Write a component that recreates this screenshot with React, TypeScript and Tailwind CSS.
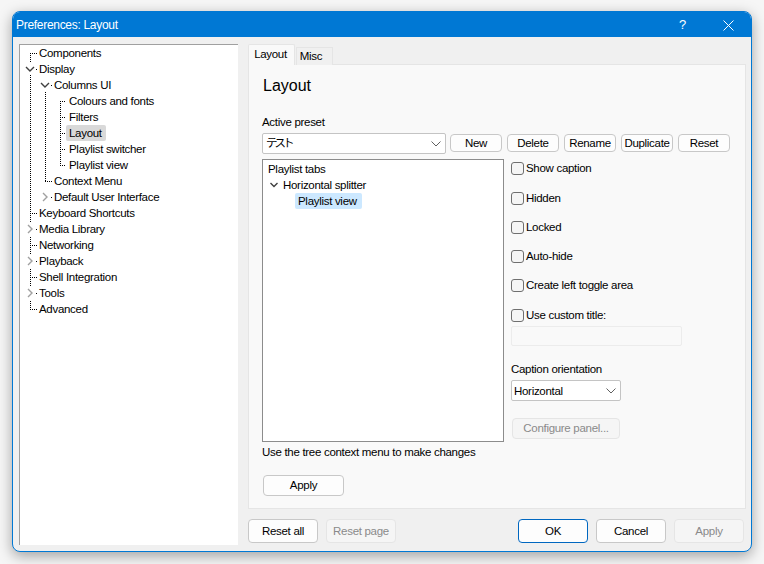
import React from "react";

const font = { fontFamily: '"Liberation Sans", "Noto Sans CJK JP", sans-serif' };

const treeRows: [number, string, boolean?][] = [
  [0, "Components"],
  [0, "Display"],
  [1, "Columns UI"],
  [2, "Colours and fonts"],
  [2, "Filters"],
  [2, "Layout", true],
  [2, "Playlist switcher"],
  [2, "Playlist view"],
  [1, "Context Menu"],
  [1, "Default User Interface"],
  [0, "Keyboard Shortcuts"],
  [0, "Media Library"],
  [0, "Networking"],
  [0, "Playback"],
  [0, "Shell Integration"],
  [0, "Tools"],
  [0, "Advanced"],
];

const pad = ["pl-[16px]", "pl-[31px]", "pl-[46px]"];

function TreeLines() {
  const open = (x: number, y: number) => (
    <path d={`M${x - 4} ${y - 2}L${x} ${y + 2}L${x + 4} ${y - 2}`} stroke="#404040" strokeWidth="1.4" fill="none" />
  );
  const closed = (x: number, y: number) => (
    <path d={`M${x - 2} ${y - 4}L${x + 2} ${y}L${x - 2} ${y + 4}`} stroke="#a0a0a0" strokeWidth="1.4" fill="none" />
  );
  return (
    <svg className="absolute left-0 top-0" width="60" height="280" viewBox="0 0 60 280">
      <g stroke="#000" strokeWidth="1" strokeDasharray="1 1" fill="none" shapeRendering="crispEdges">
        <path d="M10.5 8V17M10.5 30V265" />
        <path d="M10 8.5H18M16 24.5H18M31 40.5H33" />
        <path d="M25.5 47V137" />
        <path d="M40.5 56V121" />
        <path d="M40 56.5H46M40 72.5H46M40 88.5H46M40 104.5H46M40 120.5H46" />
        <path d="M25 136.5H33M31 152.5H33" />
        <path d="M10 168.5H18M16 184.5H18M10 200.5H18M16 216.5H18M10 232.5H18M16 248.5H18M10 264.5H18" />
      </g>
      <rect x="5" y="178" width="10" height="14" fill="#fff" />
      <rect x="5" y="210" width="10" height="14" fill="#fff" />
      <rect x="5" y="242" width="10" height="14" fill="#fff" />
      {open(10, 24)}
      {open(25, 40)}
      {closed(25, 152)}
      {closed(10, 184)}
      {closed(10, 216)}
      {closed(10, 248)}
    </svg>
  );
}

function Tree() {
  return (
    <div className="relative h-[501px] w-[219px] border-l border-t border-l-[#a0a0a0] border-t-[#a0a0a0] bg-white text-black">
      <TreeLines />
      {treeRows.map(([lvl, label, sel]) => (
        <div key={label} className={`relative flex h-4 items-center ${pad[lvl]}`}>
          <span className={`h-4 rounded-[2px] pl-[3px] pr-[4px] leading-4 ${sel ? "bg-[#d9d9d9]" : ""}`}>{label}</span>
        </div>
      ))}
    </div>
  );
}

function Chevron() {
  return (
    <svg width="10" height="6" viewBox="0 0 10 6" className="shrink-0">
      <path d="M0.5 0.5L5 5L9.5 0.5" fill="none" stroke="#606060" strokeWidth="1" />
    </svg>
  );
}

function Btn({ children, w, h, disabled, primary }: { children: string; w: string; h: string; disabled?: boolean; primary?: boolean }) {
  const look = disabled
    ? "border-[#e5e5e5] bg-[#f5f5f5] text-[#8a8a8a]"
    : primary
      ? "border-[#0067c0] bg-[#fdfdfd] text-black border-[1.5px]"
      : "border-[#c8c8c8] bg-[#fdfdfd] text-black";
  return (
    <div className={`flex shrink-0 items-center justify-center rounded-[4px] border pt-px ${w} ${h} ${look}`}>{children}</div>
  );
}

function Check({ label, className }: { label: string; className: string }) {
  return (
    <div className={`flex h-4 items-center gap-[2px] ${className}`}>
      <div className="h-[13px] w-[13px] rounded-[3px] border border-[#6f6f6f] bg-[#f5f5f5]" />
      <span className="leading-4">{label}</span>
    </div>
  );
}

function Page() {
  return (
    <div className="flex h-[444px] w-[498px] flex-col border border-t-0 border-[#e5e5e5] bg-[#f9f9f9] pl-[13px]">
      <div className="ml-px mt-[10px] h-[22px] text-[16px] leading-[22px] tracking-normal">Layout</div>
      <div className="mt-[17px] h-4 leading-4">Active preset</div>
      <div className="mt-[3px] flex items-start gap-[4px]">
        <div className="flex h-[21px] w-[184px] items-center justify-between rounded-[2px] border border-[#c4c4c4] bg-white pl-[3px] pr-[4px]">
          <span className="tracking-[-3px]">テスト</span>
          <Chevron />
        </div>
        <div className="mt-px flex gap-[5px]">
          {["New", "Delete", "Rename", "Duplicate", "Reset"].map((b) => (
            <Btn key={b} w="w-[52px]" h="h-[18px]">{b}</Btn>
          ))}
        </div>
      </div>
      <div className="mt-[5px] flex">
        <div className="flex h-[283px] w-[242px] flex-col border border-[#8c8c8c] bg-white pt-[1px]">
          <div className="flex h-4 items-center pl-[5px] leading-4">Playlist tabs</div>
          <div className="flex h-4 items-center gap-[5px] pl-[7px] leading-4">
            <svg width="8" height="6" viewBox="0 0 8 6"><path d="M0.5 1L4 4.5L7.5 1" fill="none" stroke="#404040" strokeWidth="1.4" /></svg>
            <span>Horizontal splitter</span>
          </div>
          <div className="ml-[32px] flex h-4 w-fit items-center rounded-[2px] bg-[#cce8ff] pl-[3px] pr-[5px] leading-4">Playlist view</div>
        </div>
        <div className="ml-[7px] flex flex-col items-start">
          <Check label="Show caption" className="mt-px" />
          <Check label="Hidden" className="mt-[14px]" />
          <Check label="Locked" className="mt-[13px]" />
          <Check label="Auto-hide" className="mt-[13px]" />
          <Check label="Create left toggle area" className="mt-[13px]" />
          <Check label="Use custom title:" className="mt-[14px]" />
          <div className="mt-[3px] h-5 w-[171px] rounded-[2px] border border-[#ececec] bg-[#f9f9f9]" />
          <div className="mt-[15px] h-4 leading-4">Caption orientation</div>
          <div className="mt-[3px] flex h-[21px] w-[110px] items-center justify-between rounded-[2px] border border-[#c4c4c4] bg-white pl-[2px] pr-[4px]">
            <span className="pt-[2px]">Horizontal</span>
            <Chevron />
          </div>
          <div className="ml-px mt-[17px]">
            <Btn w="w-[108px]" h="h-[21px]" disabled>Configure panel...</Btn>
          </div>
        </div>
      </div>
      <div className="mt-[2px] h-4 leading-4">Use the tree context menu to make changes</div>
      <div className="ml-px mt-[15px]">
        <Btn w="w-[81px]" h="h-[21px]">Apply</Btn>
      </div>
    </div>
  );
}

export default function App() {
  return (
    <div className="h-[564px] w-[764px] overflow-hidden bg-[#f6f6f6] pl-[12px] pt-[11px] text-[11.5px] tracking-[-0.3px] text-black" style={font}>
      <div className="flex h-[541px] w-[740px] flex-col overflow-hidden rounded-[8px] border border-[#0078d4] bg-[#f0f0f0] shadow-[0_4px_14px_rgba(0,0,0,0.35)]">
        <div className="flex h-[25px] shrink-0 items-center justify-between bg-[#0078d4] pl-[3px] pt-px text-white">
          <span className="text-[12px]">Preferences: Layout</span>
          <div className="flex items-center gap-[37px] pr-[17px]">
            <span className="text-[13px]">?</span>
            <svg width="11" height="11" viewBox="0 0 11 11"><path d="M0.5 0.5L10.5 10.5M10.5 0.5L0.5 10.5" stroke="#fff" strokeWidth="1" /></svg>
          </div>
        </div>
        <div className="flex flex-1 pl-[6px] pt-[7px]">
          <Tree />
          <div className="ml-[10px] flex flex-col">
            <div className="flex h-[21px] items-end">
              <div className="flex h-[21px] w-[47px] items-center justify-center rounded-t-[2px] border border-b-0 border-[#e5e5e5] bg-[#f9f9f9] pr-[2px]">Layout</div>
              <div className="ml-px flex h-[18px] w-[37px] items-center justify-center border border-b-0 border-[#e5e5e5] bg-[#f0f0f0] pr-[10px] pl-[3px] pt-px">Misc</div>
              <div className="h-px w-[413px] bg-[#e5e5e5]" />
            </div>
            <Page />
            <div className="mt-[10px] flex w-[496px] items-center">
              <Btn w="w-[70px]" h="h-[24px]">Reset all</Btn>
              <div className="ml-[8px]"><Btn w="w-[70px]" h="h-[24px]" disabled>Reset page</Btn></div>
              <div className="ml-auto flex gap-[8px]">
                <Btn w="w-[70px]" h="h-[24px]" primary>OK</Btn>
                <Btn w="w-[70px]" h="h-[24px]">Cancel</Btn>
                <Btn w="w-[70px]" h="h-[24px]" disabled>Apply</Btn>
              </div>
            </div>
          </div>
        </div>
      </div>
    </div>
  );
}
